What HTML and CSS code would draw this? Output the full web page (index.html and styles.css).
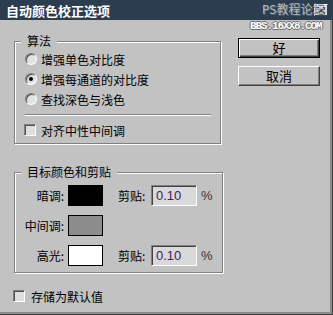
FILE: index.html
```html
<!DOCTYPE html>
<html lang="zh-CN">
<head>
    <meta charset="UTF-8">
    <title>自动颜色校正选项</title>
    <link rel="stylesheet" href="styles.css">
</head>
<body>

    <div class="window">
        <!-- Title bar -->
        <div class="titlebar">
            <span class="title">自动颜色校正选项</span>
            <span class="close">
                <svg width="8" height="7" viewBox="0 0 8 7"><path d="M0.5 0.5 L7.5 6.5 M7.5 0.5 L0.5 6.5" stroke="#000" stroke-width="1.6"/></svg>
            </span>
            <span class="mark mark-cn">PS教程论坛</span>
            <span class="mark mark-en">BBS.16XX8.COM</span>
        </div>

        <div class="dialog">
            <div class="main">
                <fieldset class="group algo">
                    <legend>算法</legend>
                    <div class="opt"><span class="radio"></span>增强单色对比度</div>
                    <div class="opt"><span class="radio on"></span>增强每通道的对比度</div>
                    <div class="opt"><span class="radio"></span>查找深色与浅色</div>
                    <div class="sep"></div>
                    <div class="opt"><span class="check"></span>对齐中性中间调</div>
                </fieldset>

                <fieldset class="group target">
                    <legend>目标颜色和剪贴</legend>
                    <div class="row">
                        <span class="lbl">暗调:</span>
                        <span class="swatch shadow"></span>
                        <span class="clip">剪贴:</span>
                        <span class="field">0.10</span>
                        <span class="pct">%</span>
                    </div>
                    <div class="row">
                        <span class="lbl">中间调:</span>
                        <span class="swatch midtone"></span>
                    </div>
                    <div class="row">
                        <span class="lbl">高光:</span>
                        <span class="swatch highlight"></span>
                        <span class="clip">剪贴:</span>
                        <span class="field">0.10</span>
                        <span class="pct">%</span>
                    </div>
                </fieldset>

                <div class="opt save"><span class="check"></span>存储为默认值</div>
            </div>

            <div class="buttons">
                <div class="btn default">好</div>
                <div class="btn">取消</div>
            </div>
        </div>
    </div>

</body>
</html>
```

FILE: styles.css
```css
body {
    margin: 0;
    padding: 0;
    font-family: "Noto Sans CJK SC", "Noto Sans", sans-serif;
    font-size: 12px;
    color: #000;
    background-color: #c2c2c2;
}

.window {
    position: relative;
    width: 333px;
    height: 315px;
    box-sizing: border-box;
    background-color: #c2c2c2;
    box-shadow: inset -1px -1px 0 #404040, inset -3px -3px 0 #8a8a8a;
    overflow: hidden;
}

/* Title bar */
.titlebar {
    position: relative;
    height: 20px;
    background-color: #2b3d4f;
}

.title {
    display: block;
    padding-left: 6px;
    line-height: 21px;
    font-size: 13px;
    font-weight: bold;
    color: #fff;
}

.close {
    position: absolute;
    top: 4px;
    right: 5px;
    width: 14px;
    height: 12px;
    box-sizing: border-box;
    display: flex;
    align-items: center;
    justify-content: center;
    background-color: #d4d4d4;
    border: 1px solid;
    border-color: #fff #404040 #404040 #fff;
}

.mark {
    position: absolute;
    white-space: nowrap;
}

.mark-cn {
    top: 2px;
    left: 262px;
    font-family: "DejaVu Sans Mono", "Noto Sans CJK SC", monospace;
    font-size: 12px;
    line-height: 16px;
    color: #b8b8b8;
    text-shadow: 1px 1px 0 #56687a;
}

.mark-en {
    top: 20px;
    left: 250px;
    font-family: "Liberation Mono", monospace;
    font-size: 11px;
    font-weight: bold;
    line-height: 12px;
    letter-spacing: -1.1px;
    color: #fff;
    text-shadow: 1px 0 0 #6a6a6a, -1px 0 0 #6a6a6a, 0 1px 0 #6a6a6a, 0 -1px 0 #6a6a6a;
}

/* Dialog body */
.dialog {
    display: flex;
    padding: 14px 0 0 13px;
}

.main {
    width: 208px;
}

.group {
    margin: 0 0 0 1px;
    padding: 1px 9px 3px 10px;
    width: 207px;
    box-sizing: border-box;
    border: 1px solid #808080;
    box-shadow: inset 1px 1px 0 #fff, 1px 1px 0 #fff;
}

.group legend {
    padding: 0 6px 0 6px;
    margin-left: -4px;
    line-height: 14px;
    background-color: #c2c2c2;
}

.opt {
    display: flex;
    align-items: center;
    height: 20px;
    white-space: nowrap;
}

.radio {
    position: relative;
    width: 12px;
    height: 12px;
    box-sizing: border-box;
    margin-right: 4px;
    border-radius: 50%;
    border: 1px solid;
    border-color: #808080 #fff #fff #808080;
    background-color: #e2e2e2;
    box-shadow: inset 1px 1px 0 #505050;
}

.radio.on::after {
    content: "";
    position: absolute;
    left: 3px;
    top: 3px;
    width: 4px;
    height: 4px;
    border-radius: 50%;
    background-color: #000;
}

.check {
    width: 12px;
    height: 12px;
    box-sizing: border-box;
    margin-right: 6px;
    border: 1px solid;
    border-color: #808080 #fff #fff #808080;
    background-color: #dedede;
    box-shadow: inset 1px 1px 0 #505050;
}

.algo .check {
    margin-left: -1px;
    margin-right: 5px;
}

.sep {
    height: 1px;
    margin: 5px 0 4px;
    background-color: #808080;
    border-bottom: 1px solid #fff;
}

.target {
    margin-top: 21px;
    padding: 5px 9px 6px 10px;
}

.row {
    display: flex;
    align-items: center;
    height: 22px;
    margin-bottom: 8px;
    white-space: nowrap;
}

.row:last-child {
    margin-bottom: 0;
}

.lbl {
    width: 40px;
    margin-left: -1px;
    margin-right: 4px;
    text-align: right;
}

.swatch {
    width: 35px;
    height: 21px;
    box-sizing: border-box;
    border: 1px solid #000;
}

.swatch.shadow { background-color: #000; }
.swatch.midtone { background-color: #8c8c8c; }
.swatch.highlight { background-color: #fff; }

.clip {
    width: 33px;
    margin-left: 15px;
}

.field {
    width: 46px;
    height: 21px;
    box-sizing: border-box;
    padding-left: 4px;
    border: 1px solid;
    border-color: #808080 #fff #fff #808080;
    box-shadow: inset 1px 1px 0 #404040;
    background-color: #d9d9d9;
    font-family: "Liberation Sans", Arial, sans-serif;
    font-size: 13px;
    line-height: 19px;
    color: #3e2266;
}

.pct {
    margin-left: 4px;
    font-family: "Liberation Sans", Arial, sans-serif;
    font-size: 13px;
    color: #333;
}

.save {
    margin-top: 13px;
}

/* Buttons */
.buttons {
    margin: 4px 0 0 17px;
    display: flex;
    flex-direction: column;
    gap: 8px;
}

.btn {
    width: 82px;
    height: 20px;
    box-sizing: border-box;
    text-align: center;
    line-height: 18px;
    font-size: 13px;
    border: 1px solid;
    border-color: #fff #404040 #404040 #fff;
    box-shadow: inset -1px -1px 0 #808080;
    background-color: #c2c2c2;
}

.btn.default {
    border-color: #000;
    box-shadow: inset 1px 1px 0 #fff, inset -1px -1px 0 #404040, inset -2px -2px 0 #808080;
}
```
